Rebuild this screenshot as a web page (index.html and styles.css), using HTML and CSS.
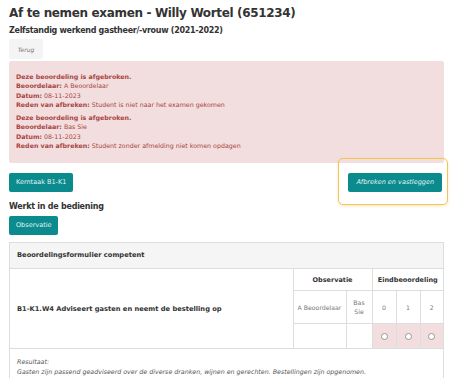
FILE: index.html
```html
<!DOCTYPE html>
<html lang="nl">
<head>
    <meta charset="UTF-8">
    <meta name="viewport" content="width=device-width, initial-scale=1.0">
    <title>Af te nemen examen</title>
    <link rel="stylesheet" href="styles.css">
</head>
<body>
    <h1 class="title">Af te nemen examen - Willy Wortel (651234)</h1>
    <h2 class="subtitle">Zelfstandig werkend gastheer/-vrouw (2021-2022)</h2>
    <button class="btn-back">Terug</button>

    <div class="alert">
        <p>
            <strong>Deze beoordeling is afgebroken.</strong><br>
            <strong>Beoordelaar:</strong> A Beoordelaar<br>
            <strong>Datum:</strong> 08-11-2023<br>
            <strong>Reden van afbreken:</strong> Student is niet naar het examen gekomen
        </p>
        <p>
            <strong>Deze beoordeling is afgebroken.</strong><br>
            <strong>Beoordelaar:</strong> Bas Sie<br>
            <strong>Datum:</strong> 08-11-2023<br>
            <strong>Reden van afbreken:</strong> Student zonder afmelding niet komen opdagen
        </p>
    </div>

    <div class="actions">
        <button class="btn">Kerntaak B1-K1</button>
        <div class="highlight">
            <button class="btn btn-italic">Afbreken en vastleggen</button>
        </div>
    </div>

    <h3 class="section">Werkt in de bediening</h3>
    <button class="btn">Observatie</button>

    <div class="panel">
        <div class="panel-heading">Beoordelingsformulier competent</div>
        <table class="form-table">
            <colgroup>
                <col class="w-task">
                <col class="w-a">
                <col class="w-b">
                <col class="w-n">
                <col class="w-n">
                <col class="w-last">
            </colgroup>
            <tr class="row-head">
                <td class="task" rowspan="3">B1-K1.W4 Adviseert gasten en neemt de bestelling op</td>
                <th colspan="2">Observatie</th>
                <th colspan="3">Eindbeoordeling</th>
            </tr>
            <tr class="row-names">
                <td>A Beoordelaar</td>
                <td class="col-b">Bas<br>Sie</td>
                <td>0</td>
                <td>1</td>
                <td>2</td>
            </tr>
            <tr class="row-radio">
                <td></td>
                <td></td>
                <td class="pick"><span class="radio"></span></td>
                <td class="pick"><span class="radio"></span></td>
                <td class="pick"><span class="radio"></span></td>
            </tr>
        </table>
        <div class="result">
            Resultaat:<br>
            Gasten zijn passend geadviseerd over de diverse dranken, wijnen en gerechten. Bestellingen zijn opgenomen.
        </div>
    </div>
</body>
</html>
```

FILE: styles.css
```css
body {
    margin: 0;
    padding: 0 9px;
    font-family: "DejaVu Sans", Verdana, sans-serif;
    color: #333;
    background-color: #fff;
}
.title {
    font-size: 12px;
    line-height: 16px;
    margin: 5px 0 0;
    letter-spacing: -0.35px;
}
.subtitle {
    font-size: 8px;
    line-height: 12px;
    margin: 4px 0 0;
    letter-spacing: -0.3px;
}
.btn-back {
    display: block;
    margin-top: 2px;
    width: 34px;
    height: 20px;
    padding: 0;
    border: none;
    border-radius: 2px;
    background-color: #f4f4f4;
    color: #777;
    font-family: inherit;
    font-size: 6px;
    font-style: italic;
}
/* Melding */
.alert {
    margin-top: 2px;
    padding: 11px 7px 12.6px;
    background-color: #f2dede;
    color: #a94442;
    border-radius: 2px;
    font-size: 6.3px;
    line-height: 9.3px;
}
.alert p {
    margin: 0;
}
.alert p + p {
    margin-top: 4px;
}
.actions {
    display: flex;
    justify-content: space-between;
    margin-top: 10px;
    padding-right: 2px;
}
.btn {
    display: block;
    height: 19px;
    padding: 0 7px;
    border: none;
    border-radius: 2px;
    background-color: #0b8b8d;
    color: #e6f4f4;
    font-family: inherit;
    font-size: 6.5px;
}
.btn-italic {
    font-style: italic;
    padding: 0 8px;
}
.highlight {
    position: relative;
}
.highlight::after {
    content: "";
    position: absolute;
    top: -15px;
    bottom: -13px;
    left: -10px;
    right: -6px;
    border: 1.5px solid #f3c451;
    border-radius: 5px;
    box-shadow: 0 1px 3px rgba(240, 190, 80, 0.4);
}
.section {
    font-size: 8px;
    line-height: 12px;
    margin: 9px 0 3px;
    letter-spacing: -0.25px;
}
/* Formulier */
.panel {
    margin-top: 7px;
    border: 1px solid #ddd;
    border-bottom: none;
}
.panel-heading {
    height: 25px;
    line-height: 25px;
    padding: 0 7px;
    background-color: #f5f5f5;
    border-bottom: 1px solid #ddd;
    font-size: 6.7px;
    font-weight: bold;
}
.form-table {
    width: 100%;
    table-layout: fixed;
    border-collapse: collapse;
    font-size: 6.2px;
}
.w-task {
    width: 283px;
}
.w-a {
    width: 53px;
}
.w-b {
    width: 26px;
}
.w-n {
    width: 24px;
}
.w-last {
    width: 23px;
}
.form-table td,
.form-table th {
    border: 1px solid #ddd;
    text-align: center;
    padding: 0;
}
.form-table tr:first-child td,
.form-table tr:first-child th {
    border-top: none;
}
.form-table td:first-child {
    border-left: none;
}
.form-table tr td:last-child,
.form-table tr th:last-child {
    border-right: none;
}
.row-head {
    height: 22px;
}
.row-head th {
    font-size: 6.5px;
}
.row-names {
    height: 33px;
    color: #777;
}
.row-radio {
    height: 25px;
}
.task {
    text-align: left !important;
    padding-left: 7px !important;
    font-weight: bold;
    font-size: 6.7px;
    color: #333;
}
.col-b {
    line-height: 9px;
}
.pick {
    background-color: #f2dede;
}
.radio {
    display: inline-block;
    width: 5px;
    height: 5px;
    border: 1px solid #999;
    border-radius: 50%;
    background-color: #fff;
    vertical-align: middle;
}
.result {
    padding: 8px 7px;
    font-size: 6.3px;
    line-height: 10px;
    font-style: italic;
    color: #555;
}
```
